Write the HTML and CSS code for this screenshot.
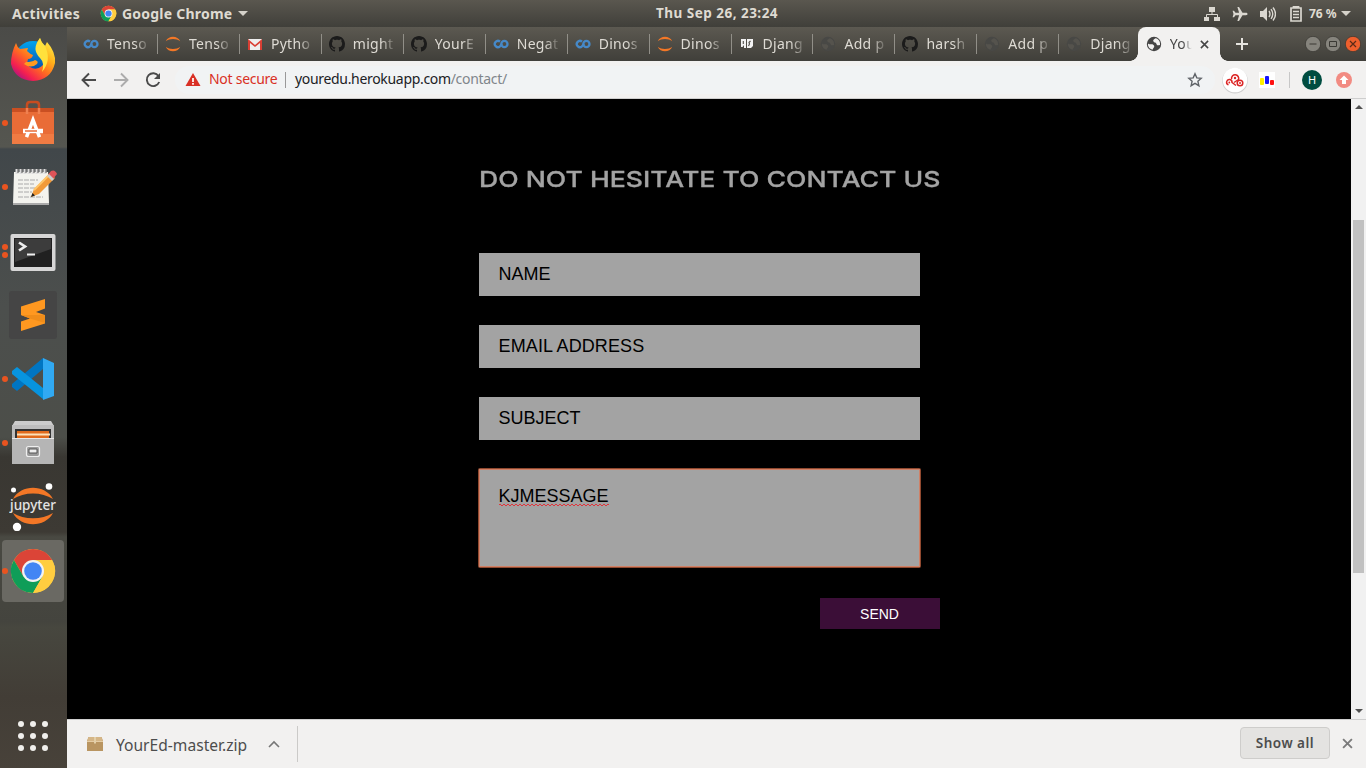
FILE: index.html
```html
<!DOCTYPE html>
<html lang="en">
<head>
<meta charset="utf-8">
<title>Contact</title>
<link rel="stylesheet" href="styles.css">
</head>
<body>
<svg class="defs" width="0" height="0" aria-hidden="true">
  <symbol id="colab" viewBox="0 0 16 16"><g fill="none" stroke="#4689c8" stroke-width="2.3"><circle cx="11.4" cy="8" r="3.1"/><path d="M7 5.7A3.1 3.1 0 1 0 7 10.3L9 8"/></g></symbol>
  <symbol id="jup" viewBox="0 0 16 16"><path d="M.8 5.3C3-.8 13-.8 15.2 5.300C11.500 2.300 4.500 2.300.8 5.300ZM.8 10.800C3 16.800 13 16.800 15.200 10.800C11.500 13.700 4.500 13.700.8 10.800Z" fill="#f37726"/></symbol>
  <symbol id="gmail" viewBox="0 0 16 16"><path d="M1 3h14v11H1z" fill="#eee"/><path d="M1 14V3l7 6 7-6v11h-2V7l-5 4-5-4v7z" fill="#d93f34"/></symbol>
  <symbol id="github" viewBox="0 0 16 16"><path fill="#1b1b1b" fill-rule="evenodd" d="M8 0C3.580 0 0 3.580 0 8c0 3.540 2.290 6.530 5.470 7.590.4.070.55-.17.55-.38 0-.19-.01-.82-.01-1.490-2.010.37-2.530-.49-2.690-.94-.09-.23-.48-.94-.82-1.130-.28-.15-.68-.52-.01-.53.63-.01 1.080.58 1.230.82.72 1.210 1.870.87 2.330.66.07-.52.28-.87.51-1.070-1.780-.2-3.640-.89-3.640-3.950 0-.87.31-1.590.82-2.150-.08-.2-.36-1.020.08-2.120 0 0 .67-.21 2.200.82.64-.18 1.320-.27 2-.27s1.360.09 2 .27c1.530-1.040 2.200-.82 2.200-.82.44 1.100.16 1.920.08 2.120.51.56.82 1.270.82 2.150 0 3.070-1.870 3.750-3.650 3.950.29.25.54.73.54 1.480 0 1.070-.01 1.930-.01 2.200 0 .21.15.46.55.38A8 8 0 0 0 16 8c0-4.420-3.580-8-8-8z"/></symbol>
  <symbol id="dj" viewBox="0 0 16 16"><path d="M2 3h5v9H5V9L3.500 11H2zM8 3h6v7l-2 2H8z" fill="#f2f2f2"/><path d="M4.300 5v3M11.500 5l-1.500 1.500.5 1.500-1 2" fill="none" stroke="#504e48" stroke-width="1.100"/></symbol>
  <symbol id="globe" viewBox="0 0 16 16"><circle cx="8" cy="8" r="7.200" fill="currentColor"/><path d="M2 7.500C4 9 6 7.500 7.500 9S8 11 6.500 13.700C3.500 13 1.700 10.500 2 7.500zM9.500 2.200C8 3.500 6.500 4 7.500 5.500S10 6 10.500 8s1.500 1 3.500 1C14.500 5.500 12.500 2.800 9.500 2.200z" class="land"/></symbol>
  <symbol id="chrome" viewBox="0 0 48 48"><circle cx="24" cy="24" r="22" fill="#ffcd40"/><path d="M4.900 13A22 22 0 0 1 43.100 13H24L14.500 29.500Z" fill="#db4437"/><path d="M4.900 13A22 22 0 0 0 24 46L33.500 29.500H14.500Z" fill="#0f9d58"/><path d="M24 13H43.100A22 22 0 0 1 24 46L33.500 29.500Z" fill="#ffcd40"/><circle cx="24" cy="24" r="11" fill="#f2f2f2"/><circle cx="24" cy="24" r="8.800" fill="#4285f4"/></symbol>
  <symbol id="cross" viewBox="0 0 10 10"><path d="M1 1l8 8M9 1L1 9" fill="none" stroke="currentColor" stroke-width="1.700"/></symbol>
</svg>

<header class="topbar">
  <span class="activities">Activities</span>
  <svg class="app-icon"><use href="#chrome"/></svg>
  <span class="app-name">Google Chrome</span>
  <i class="caret"></i>
  <span class="clock">Thu Sep 26, 23:24</span>
  <div class="status">
    <svg width="16" height="16" viewBox="0 0 16 16"><path d="M5 1h6v5H5zM0 11h5v4H0zM10 11h6v4h-6z" fill="#dad7d0"/><path d="M8 6v3M2.500 11V8.500h11V11" fill="none" stroke="#dad7d0"/></svg>
    <svg width="16" height="16" viewBox="0 0 16 16"><path d="M15.500 8c0-.8-.7-1.200-1.500-1.200h-3.500L7 1H5.400l1.700 5.800H3.500L2 4.700H.6L1.500 8l-.9 3.300H2l1.500-2.100h3.600L5.400 15H7l3.500-5.800H14c.8 0 1.500-.4 1.500-1.200z" fill="#dad7d0"/></svg>
    <svg width="16" height="16" viewBox="0 0 16 16"><path d="M0 5h3l4-4v14l-4-4H0z" fill="#dad7d0"/><path d="M9 5q2 3 0 6M11 3.200q3.500 4.800 0 9.600M13 1.500q5 6.500 0 13" fill="none" stroke="#dad7d0" stroke-width="1.400"/></svg>
    <svg class="battery" width="12" height="16" viewBox="0 0 12 16"><path d="M3.500 2V.8h5V2M1 2h10v13H1z" fill="none" stroke="#dad7d0" stroke-width="1.700"/><path d="M3 5.500h6M3 8.500h6M3 11.500h6" stroke="#dad7d0" stroke-width="1.500"/></svg>
    <span class="percent">76 %</span>
    <i class="caret"></i>
  </div>
</header>

<div class="desktop">
  <nav class="dock">
    <div class="slot"><svg viewBox="0 0 48 48"><defs><linearGradient id="ff" x1=".9" y1="0" x2=".15" y2=".9"><stop offset="0" stop-color="#fff44f"/><stop offset=".35" stop-color="#ffb11a"/><stop offset=".6" stop-color="#ff6a22"/><stop offset=".85" stop-color="#f42050"/><stop offset="1" stop-color="#b5157c"/></linearGradient><linearGradient id="fb" x1="0" y1="0" x2="0" y2="1"><stop offset="0" stop-color="#00a5ef"/><stop offset="1" stop-color="#0b3a9b"/></linearGradient></defs><circle cx="24" cy="24" r="18" fill="url(#fb)"/><path d="M7 8q1 4 4 6l8-1-1 3q3 3 6 4-1 4-5 4-2 5 2 8 6 4 12-1 4-4 2-11Q26 16 31 3q1 5 5 8l2-4q9 10 8 21-4 17-22 18Q6 45 2 29 2 18 7 8z" fill="url(#ff)"/><path d="M17 27q6 0 9-2 4 1 2 4-6 5-13 0z" fill="#ff9a20"/><path d="M31 3q-9 11 0 20 5 5 2 14 10-12 3-26-4-4-5-8z" fill="#ffe13c"/></svg></div>
    <div class="slot run"><svg viewBox="0 0 48 48"><path d="M18 12V6q0-3 3-3h6q3 0 3 3v6" fill="none" stroke="#c84c20" stroke-width="2.500"/><path d="M3 9h42v36H3z" fill="#e96c37"/><path d="M3 9h42v4H3z" fill="#c94f22"/><path d="M18 9v6M30 9v6" stroke="#ef8050" stroke-width="2.500"/><path d="M3 35h42v10H3z" fill="#f07b43"/><path d="M17.500 38l6.500-17 6.500 17" fill="none" stroke="#fff" stroke-width="3.500"/><path d="M14 32h20" stroke="#fff" stroke-width="4.500"/><path d="M16 32h12" stroke="#e96c37" stroke-width="1.500"/></svg></div>
    <div class="slot run"><svg viewBox="0 0 48 48"><path d="M5 9h34l1 32H4z" fill="#f3f3ee"/><path d="M4 40h36v2H4z" fill="#aaa"/><path d="M8 6v5M12 6v5M16 6v5M20 6v5M24 6v5M28 6v5M32 6v5M36 6v5" stroke="#ddd" stroke-width="3"/><path d="M9 6v4M13 6v4M17 6v4M21 6v4M25 6v4M29 6v4M33 6v4M37 6v4" stroke="#555"/><path d="M9 17h20M9 21h16M9 25h22M9 29h14M9 34h25" stroke="#aaa" stroke-dasharray="5 1"/><path d="M22 34l3-8 16-16 5 5-16 16z" fill="#f29a38"/><path d="M25 27l16-16" stroke="#ffc66b" stroke-width="2"/><path d="M39 12l3-4q4-2 6 3l-4 5z" fill="#df5358"/><path d="M38 13l2-2 5 5-2 2z" fill="#ccc"/><path d="M22 34l1.500-4 2.500 2.500z" fill="#222"/></svg></div>
    <div class="slot run two"><svg viewBox="0 0 48 48"><rect x="1.500" y="7" width="45" height="37" rx="2" fill="#d6d6d6"/><path d="M5 11h38v29H5z" fill="#202020"/><path d="M6 12h36v10L6 35z" fill="#3c3c3c"/><path d="M10 15.500l6 4-6 4" fill="none" stroke="#eee" stroke-width="2.700"/><path d="M18 27.500h8" stroke="#eee" stroke-width="2"/></svg></div>
    <div class="slot"><svg viewBox="0 0 48 48"><rect width="48" height="48" rx="3" fill="#454545"/><path d="M12 15.500L36 8v9.500L27 21l9 3v8.500L12 40v-9.500l9-3L12 24z" fill="#ff9820"/><path d="M12 24l24 0v8l-15-4.500z" fill="#f08d1a"/></svg></div>
    <div class="slot run"><svg viewBox="0 0 48 48"><path d="M34 3v11L8 36l-5-4v-3z" fill="#0075c2"/><path d="M3 16l5-4 26 21v11L3 19z" fill="#0794df"/><path d="M34 3l11 5v33l-11 4z" fill="#31a9f2"/></svg></div>
    <div class="slot run"><svg viewBox="0 0 48 48"><path d="M6 2h36l3 5H3z" fill="#ccc"/><path d="M3 6h42v39H3z" fill="#bdbdbd"/><path d="M6 10h36v11H6z" fill="#333"/><path d="M8 12h32v8H8z" fill="#e06a1c"/><path d="M8 15.500h33" stroke="#fbe0b8" stroke-width="1.800"/><path d="M3 19h42v26H3z" fill="#b5b5b5"/><path d="M3 19.500h42" stroke="#e8e8e8"/><rect x="17.500" y="27.500" width="13" height="10" rx="2" fill="#999" stroke="#eee" stroke-width="1.200"/><path d="M20 30h8v4h-8z" fill="#eee" stroke="#555"/></svg></div>
    <div class="slot"><svg viewBox="0 0 48 48"><path d="M4 16C12 1 36 1 44 16 33 8.500 15 8.500 4 16zM4 30C12 45 36 45 44 30 33 37 15 37 4 30z" fill="#f37726"/><circle cx="4.500" cy="7" r="2.500" fill="#fff"/><circle cx="40" cy="3.500" r="3.300" fill="#fff"/><circle cx="8" cy="44" r="4.200" fill="#fff"/><text x="1" y="26.500" textLength="46" lengthAdjust="spacingAndGlyphs" class="jupyter">jupyter</text></svg></div>
    <div class="slot run active"><svg viewBox="0 0 48 48"><use href="#chrome"/></svg></div>
    <div class="apps"><i></i><i></i><i></i><i></i><i></i><i></i><i></i><i></i><i></i></div>
  </nav>

  <section class="browser">
    <div class="tabs">
      <div class="tab"><svg><use href="#colab"/></svg><span>Tenso</span></div>
      <div class="tab"><svg><use href="#jup"/></svg><span>Tenso</span></div>
      <div class="tab"><svg><use href="#gmail"/></svg><span>Pytho</span></div>
      <div class="tab"><svg><use href="#github"/></svg><span>might</span></div>
      <div class="tab"><svg><use href="#github"/></svg><span>YourE</span></div>
      <div class="tab"><svg><use href="#colab"/></svg><span>Negat</span></div>
      <div class="tab"><svg><use href="#colab"/></svg><span>Dinos</span></div>
      <div class="tab"><svg><use href="#jup"/></svg><span>Dinos</span></div>
      <div class="tab"><svg><use href="#dj"/></svg><span>Djang</span></div>
      <div class="tab dim"><svg><use href="#globe"/></svg><span>Add p</span></div>
      <div class="tab"><svg><use href="#github"/></svg><span>harsh</span></div>
      <div class="tab dim"><svg><use href="#globe"/></svg><span>Add p</span></div>
      <div class="tab dim last"><svg><use href="#globe"/></svg><span>Djang</span></div>
      <div class="tab current"><svg><use href="#globe"/></svg><span>You</span><svg class="x"><use href="#cross"/></svg></div>
      <svg class="plus" width="12" height="12" viewBox="0 0 12 12"><path d="M6 0v12M0 6h12" stroke="#e6e4df" stroke-width="2"/></svg>
      <div class="winctl">
        <svg viewBox="0 0 16 16"><circle cx="8" cy="8" r="7.700" fill="#86847d" stroke="#3a3934" stroke-width=".8"/><path d="M4.500 8h7" stroke="#3a3934"/></svg>
        <svg viewBox="0 0 16 16"><circle cx="8" cy="8" r="7.700" fill="#86847d" stroke="#3a3934" stroke-width=".8"/><path d="M4.500 5.500h7v5h-7z" fill="none" stroke="#3a3934"/></svg>
        <svg viewBox="0 0 16 16"><circle cx="8" cy="8" r="7.700" fill="#ee5f2d" stroke="#3a3934" stroke-width=".8"/><path d="M5 5l6 6M11 5l-6 6" stroke="#5a2a17" stroke-width="1.200"/></svg>
      </div>
    </div>

    <div class="toolbar">
      <svg class="nav" viewBox="0 0 16 16"><path d="M15 8H2M8 1.500L1.500 8 8 14.500" fill="none" stroke="#4a4a4a" stroke-width="1.900"/></svg>
      <svg class="nav" viewBox="0 0 16 16"><path d="M1 8h13M8 1.500L14.500 8 8 14.500" fill="none" stroke="#acacac" stroke-width="1.900"/></svg>
      <svg class="nav" viewBox="0 0 16 16"><path d="M13.500 4A6.400 6.400 0 1 0 14.200 10" fill="none" stroke="#4a4a4a" stroke-width="1.900"/><path d="M15 1v6H9z" fill="#4a4a4a"/></svg>
      <div class="omnibox">
        <svg width="16" height="14" viewBox="0 0 16 14"><path d="M8 0l7.500 13H.5z" fill="#d93025"/><path d="M8 5v4M8 10v1.700" stroke="#fff" stroke-width="1.700"/></svg>
        <span class="insecure">Not secure</span>
        <i class="bar"></i>
        <span class="url">youredu.herokuapp.com<em>/contact/</em></span>
        <svg class="star" width="16" height="16" viewBox="0 0 16 16"><path d="M8 1.800l1.800 4.100 4.400.4-3.300 3 1 4.400L8 11.400l-3.900 2.300 1-4.400-3.300-3 4.400-.4z" fill="none" stroke="#5f6368" stroke-width="1.400"/></svg>
      </div>
      <svg class="ext1" width="28" height="28" viewBox="0 0 28 28"><circle cx="14" cy="14.800" r="12.800" fill="#cfcfcf"/><circle cx="14" cy="14" r="12.300" fill="#fff"/><g fill="none" stroke="#dc2626" stroke-width="1.500"><path d="M7.500 18.800A2.700 2.700 0 1 1 11 16.500L15 19.500M10.600 13.200a3.600 3.600 0 1 1 6.900.5M13 16.500l4.500-3"/><circle cx="19" cy="17" r="2.800"/></g><g fill="#dc2626"><circle cx="8.300" cy="16.500" r=".9"/><circle cx="14" cy="12" r="1.200"/><circle cx="19" cy="17" r="1"/></g></svg>
      <svg class="ext2" width="16" height="16" viewBox="0 0 16 16"><path d="M0 0h16v16H0z" fill="#fff"/><rect x="1" y="6" width="4" height="7" rx="1" fill="#ffef00"/><rect x="6" y="4" width="4" height="8" rx="1" fill="#1414ff"/><rect x="11" y="8" width="4" height="5" rx="1" fill="#f11"/></svg>
      <i class="divider"></i>
      <span class="avatar">H</span>
      <svg class="update" width="16" height="16" viewBox="0 0 16 16"><circle cx="8" cy="8" r="8" fill="#f28b82"/><path d="M8 3.500L12.500 8H10v4H6V8H3.500z" fill="#fff"/></svg>
    </div>

    <div class="viewport">
      <main class="page">
        <h1><span>DO NOT HESITATE TO CONTACT US</span></h1>
        <form class="contact">
          <div class="field">NAME</div>
          <div class="field email">EMAIL ADDRESS</div>
          <div class="field">SUBJECT</div>
          <div class="field message"><span>KJMESSAGE</span></div>
          <button type="button" class="send">SEND</button>
        </form>
      </main>
      <div class="scrollbar"><i class="up"></i><i class="thumb"></i><i class="down"></i></div>
    </div>

    <footer class="downloads">
      <svg width="16" height="15" viewBox="0 0 16 15"><path d="M1.500 0h13L16 4v10H0V4z" fill="#b99561"/><path d="M1.500 0h13L16 4.500H0z" fill="#d5b687"/><path d="M0 4.500h16" stroke="#e5cda5"/><path d="M7 0h2v6.500H7z" fill="#e3cfa8"/></svg>
      <span class="file">YourEd-master.zip</span>
      <svg class="chev" width="12" height="8" viewBox="0 0 12 8"><path d="M1 7l5-5 5 5" fill="none" stroke="#777" stroke-width="1.600"/></svg>
      <i class="split"></i>
      <span class="showall">Show all</span>
      <svg class="dismiss"><use href="#cross"/></svg>
    </footer>
  </section>
</div>
</body>
</html>
```
FILE: styles.css
```css
* { box-sizing: border-box; }
body { margin: 0; width: 1366px; height: 768px; overflow: hidden; font-family: "Noto Sans", sans-serif; background: #000; }
svg { display: block; flex: none; }
.defs { display: none; }
.topbar { height: 27px; display: flex; align-items: center; padding-left: 12px; background: linear-gradient(#5a574f, #403f3a); color: #dfdbd2; font-weight: 700; font-size: 14px; line-height: 27px; white-space: nowrap; position: relative; }
.activities { width: 88px; letter-spacing: .3px; }
.app-icon { width: 17px; height: 17px; }
.app-name { margin-left: 5px; width: 111px; letter-spacing: .22px; }
.caret { border: 5px solid transparent; border-top-color: #d5d2ca; border-bottom: 0; margin-left: 5px; }
.clock { margin-left: 408px; width: 124px; font-size: 13.500px; letter-spacing: .48px; }
.status { display: flex; align-items: center; margin-left: auto; padding-right: 15px; gap: 12px; }
.battery { margin-left: 2px; }
.percent { font-size: 12px; width: 28px; margin-left: -5px; }
.status .caret { margin-left: -8px; }
.desktop { display: flex; height: 741px; }
.dock { width: 67px; display: flex; flex-direction: column; background: linear-gradient(#4b4b48 0, #555650 120px, #41474a 122px, #4c4f4d 280px, #4c4e49 410px, #393732 430px, #3d3a34 505px, #494942 510px, #44443e 595px, #47473f 600px, #423d36 670px, #48423a 100%); }
.slot { height: 64px; display: flex; align-items: center; padding-left: 9px; position: relative; }
.slot svg { width: 48px; height: 48px; }
.run::before { content: ""; position: absolute; left: 2px; top: 29px; width: 6px; height: 6px; border-radius: 50%; background: #e95420; }
.two::before { top: 25px; box-shadow: 0 8px #e95420; }
.active { margin-left: 2px; width: 62px; height: 62px; margin-top: 1px; padding-left: 7px; background: #6a6963; border-radius: 4px; }
.active::before { left: 0; top: 28px; }
.jupyter { font: 500 14px "Noto Sans", sans-serif; fill: #e4e4e4; }
.apps { margin-top: auto; margin-bottom: 17px; padding-left: 18px; display: grid; grid-template-columns: repeat(3, 6px); gap: 6px; }
.apps i { width: 6px; height: 6px; border-radius: 50%; background: #f0efec; }
.browser { flex: 1; display: flex; flex-direction: column; min-width: 0; }
.tabs { height: 34px; display: flex; align-items: center; padding-left: 9px; background: linear-gradient(#5c5951, #403f3a); }
.tab { --land: #55534d; flex: none; width: 81.950px; height: 20px; display: flex; align-items: center; padding-left: 7px; border-right: 1px solid #918f88; color: #dedbd4; font-size: 14px; letter-spacing: .3px; }
.tab > svg { width: 16px; height: 16px; }
.tab span { width: 46px; margin-left: 8px; white-space: nowrap; line-height: 20px; -webkit-mask-image: linear-gradient(90deg, #000 60%, transparent 95%); mask-image: linear-gradient(90deg, #000 60%, transparent 95%); }
.tab.last { width: 78.600px; border-color: transparent; }
.dim svg { color: #484845; }
.land { fill: var(--land); }
.tab.current { --land: #f2f1f0; height: 34px; width: 82px; padding-left: 8px; border: 0; border-radius: 8px 8px 0 0; background: #f2f1f0; color: #444; position: relative; }
.current::before, .current::after { content: ""; position: absolute; bottom: 0; width: 8px; height: 8px; }
.current::before { left: -8px; background: radial-gradient(circle at 0 0, transparent 7.500px, #f2f1f0 8px); }
.current::after { right: -8px; background: radial-gradient(circle at 100% 0, transparent 7.500px, #f2f1f0 8px); }
.current svg { color: #454545; }
.tab.current span { width: 25px; -webkit-mask-image: linear-gradient(90deg, #000 50%, transparent 88%); mask-image: linear-gradient(90deg, #000 50%, transparent 88%); }
.tab > .x { width: 9px; height: 9px; margin-left: 5px; }
.plus { margin-left: 16px; }
.winctl { margin-left: auto; display: flex; gap: 4px; padding-right: 5px; }
.winctl svg { width: 16px; height: 16px; }
.toolbar { height: 38px; display: flex; align-items: center; padding-left: 14px; background: #f2f1f0; border-bottom: 1px solid #cecece; }
.nav { width: 16px; height: 16px; margin-right: 16px; }
.omnibox { width: 1040px; height: 28px; margin-left: -2px; border-radius: 14px; background: #f1f3f4; display: flex; align-items: center; padding-left: 10px; font-size: 14px; white-space: nowrap; }
.insecure { width: 68px; margin-left: 8px; margin-bottom: 2px; color: #d93025; letter-spacing: -.27px; }
.bar { width: 1px; height: 16px; margin: 0 9px 0 8px; background: #999; }
.url { color: #202124; letter-spacing: -.32px; margin-bottom: 2px; }
.url em { font-style: normal; color: #80868b; }
.star { margin-left: auto; margin-right: 12px; }
.ext1 { margin-left: 6px; }
.ext2 { margin-left: 10px; }
.divider { width: 1px; height: 16px; margin: 0 12px 0 14px; background: #c7c7c7; }
.avatar { width: 20px; height: 20px; border-radius: 50%; background: #004d40; color: #fff; font-size: 11px; line-height: 20px; text-align: center; }
.update { margin-left: 14px; }
.viewport { height: 620px; display: flex; background: #000; }
.page { flex: 1; padding: 62px 0 0 412px; font-family: "Liberation Sans", Arial, sans-serif; }
h1 { margin: 0; height: 36px; font: 500 22px/36px Inter, sans-serif; color: #a3a3a3; white-space: nowrap; }
h1 span { display: inline-block; transform-origin: 0 50%; transform: scaleX(1.210); -webkit-text-stroke: .3px #a3a3a3; }
.contact { width: 461px; margin-top: 56px; display: flex; flex-direction: column; gap: 29px; }
.field { width: 441px; height: 43px; padding-left: 19.600px; line-height: 42px; font-size: 18px; background: #a3a3a3; color: #000; }
.email { letter-spacing: .1px; }
.message { height: 98px; padding-top: 6px; border-radius: 1px; box-shadow: 0 0 0 1px #91492f, inset 0 0 0 1px #cf8167; }
.message span { display: inline-block; height: 20px; line-height: 20px; background: repeating-linear-gradient(90deg, #e0343c 0 2px, transparent 2px 4px) 0 18px / 100% 1px no-repeat, repeating-linear-gradient(90deg, transparent 0 2px, #e0343c 2px 4px) 0 19px / 100% 1px no-repeat; }
.send { align-self: flex-end; width: 120px; height: 31px; margin-top: 2px; padding: 0 1px 0 0; border: 0; background: #3b0e37; color: #fff; font: 14px "Liberation Sans", Arial, sans-serif; }
.scrollbar { width: 15px; background: #f1f1f1; display: flex; flex-direction: column; align-items: center; }
.up, .down { border: 4px solid transparent; }
.up { border-top: 0; border-bottom-color: #505050; margin-top: 6px; }
.thumb { width: 11px; height: 353px; margin-top: 111px; background: #c1c1c1; }
.down { border-bottom: 0; border-top-color: #505050; margin-top: auto; margin-bottom: 6px; }
.downloads { height: 49px; display: flex; align-items: center; padding-left: 20px; background: #f2f1f0; border-top: 1px solid #cfcfcf; color: #4d4d4d; }
.file { width: 132px; margin-left: 13px; margin-top: 2px; font-size: 15.600px; white-space: nowrap; }
.chev { margin-left: 20px; }
.split { width: 1px; height: 36px; margin-left: 17px; background: #cbcac8; }
.showall { width: 90px; height: 32px; margin-left: auto; margin-bottom: 3px; border: 1px solid #cecdcb; border-radius: 4px; background: #e4e3e1; text-align: center; font-size: 13.500px; font-weight: 600; letter-spacing: .5px; line-height: 30px; }
.dismiss { width: 11px; height: 11px; margin: 0 13px 2px 12px; color: #7b7b7b; }
```
